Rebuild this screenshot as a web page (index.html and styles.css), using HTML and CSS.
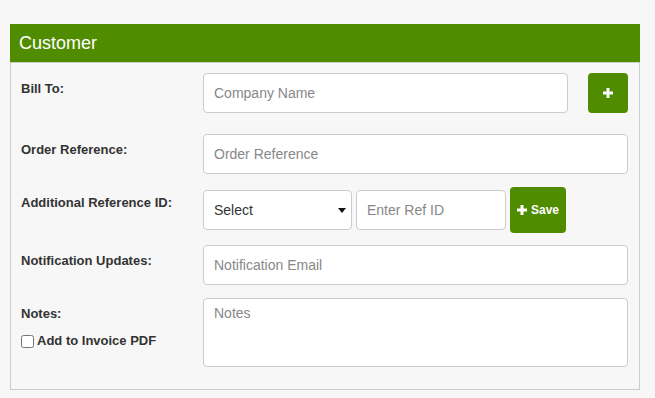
FILE: index.html
```html
<!DOCTYPE html>
<html lang="en">
<head>
  <meta charset="UTF-8" />
  <meta name="viewport" content="width=device-width, initial-scale=1.0" />
  <title>Customer</title>
  <link rel="stylesheet" href="styles.css">
</head>
<body>
  <div class="panel">
    <div class="panel-heading">Customer</div>
    <div class="panel-body">

      <div class="row row-first">
        <label class="row-label">Bill To:</label>
        <div class="row-field">
          <input type="text" class="form-input grow" placeholder="Company Name">
          <button class="btn btn-add" title="Add">
            <svg width="10" height="10" viewBox="0 0 10 10"><rect x="3.5" y="0" width="3" height="10" fill="#fff"/><rect x="0" y="3.5" width="10" height="3" fill="#fff"/></svg>
          </button>
        </div>
      </div>

      <div class="row">
        <label class="row-label">Order Reference:</label>
        <div class="row-field">
          <input type="text" class="form-input grow" placeholder="Order Reference">
        </div>
      </div>

      <div class="row row-ref">
        <label class="row-label">Additional Reference ID:</label>
        <div class="row-field tight">
          <div class="select-wrap">
            <select class="form-input form-select">
              <option>Select</option>
            </select>
          </div>
          <input type="text" class="form-input ref-input" placeholder="Enter Ref ID">
          <button class="btn btn-save">
            <svg width="10" height="10" viewBox="0 0 10 10"><rect x="3.5" y="0" width="3" height="10" fill="#fff"/><rect x="0" y="3.5" width="10" height="3" fill="#fff"/></svg>
            Save
          </button>
        </div>
      </div>

      <div class="row">
        <label class="row-label">Notification Updates:</label>
        <div class="row-field">
          <input type="text" class="form-input grow" placeholder="Notification Email">
        </div>
      </div>

      <div class="row row-last">
        <div class="row-label">
          <div>Notes:</div>
          <label class="check"><input type="checkbox"> Add to Invoice PDF</label>
        </div>
        <div class="row-field">
          <textarea class="form-input notes" placeholder="Notes"></textarea>
        </div>
      </div>

    </div>
  </div>
</body>
</html>
```

FILE: styles.css
```css
body {
  margin: 0;
  background: #f7f7f7;
  font-family: "Liberation Sans", Arial, sans-serif;
  color: #333;
}

.panel {
  width: 630px;
  margin: 24px 0 0 10px;
}

.panel-heading {
  height: 38px;
  line-height: 38px;
  padding-left: 9px;
  background: #508c00;
  color: #fff;
  font-size: 18px;
}

.panel-body {
  border: 1px solid #ccc;
  padding: 10px 11px 22px 10px;
}

.row {
  display: grid;
  grid-template-columns: 172px 1fr;
  column-gap: 10px;
  margin-bottom: 13px;
}
.row-first { margin-bottom: 21px; }
.row-ref { margin-bottom: 12px; }
.row-last { margin-bottom: 0; }

.row-label {
  font-size: 13px;
  font-weight: bold;
  line-height: 18px;
  padding-top: 7px;
}

.row-field {
  display: flex;
  align-items: center;
  gap: 20px;
}
.row-field.tight { gap: 4px; }

.form-input {
  box-sizing: border-box;
  height: 40px;
  border: 1px solid #ccc;
  border-radius: 4px;
  background: #fff;
  padding: 0 10px;
  font-family: "Liberation Sans", Arial, sans-serif;
  font-size: 14px;
  color: #333;
}
.form-input::placeholder { color: #888; }
.grow { flex: 1; }

.select-wrap { position: relative; }
.select-wrap::after {
  content: "";
  position: absolute;
  right: 6px;
  top: 18px;
  border-left: 4.5px solid transparent;
  border-right: 4.5px solid transparent;
  border-top: 5px solid #111;
  pointer-events: none;
}
.form-select {
  width: 149px;
  appearance: none;
  -webkit-appearance: none;
}
.ref-input { width: 150px; }

.btn {
  border: 0;
  border-radius: 4px;
  background: #508c00;
  color: #fff;
  cursor: pointer;
  display: flex;
  align-items: center;
  justify-content: center;
  padding: 0;
}
.btn-add { width: 40px; height: 40px; }
.btn-save {
  width: 56px;
  height: 46px;
  gap: 4px;
  font-family: "Liberation Sans", Arial, sans-serif;
  font-size: 12px;
  font-weight: bold;
}

.check {
  display: flex;
  align-items: center;
  margin-top: 9px;
}
.check input {
  width: 13px;
  height: 13px;
  margin: 0 3px 0 0;
}

.notes {
  height: 69px;
  padding-top: 6px;
  resize: none;
  display: block;
  width: 100%;
}
```
